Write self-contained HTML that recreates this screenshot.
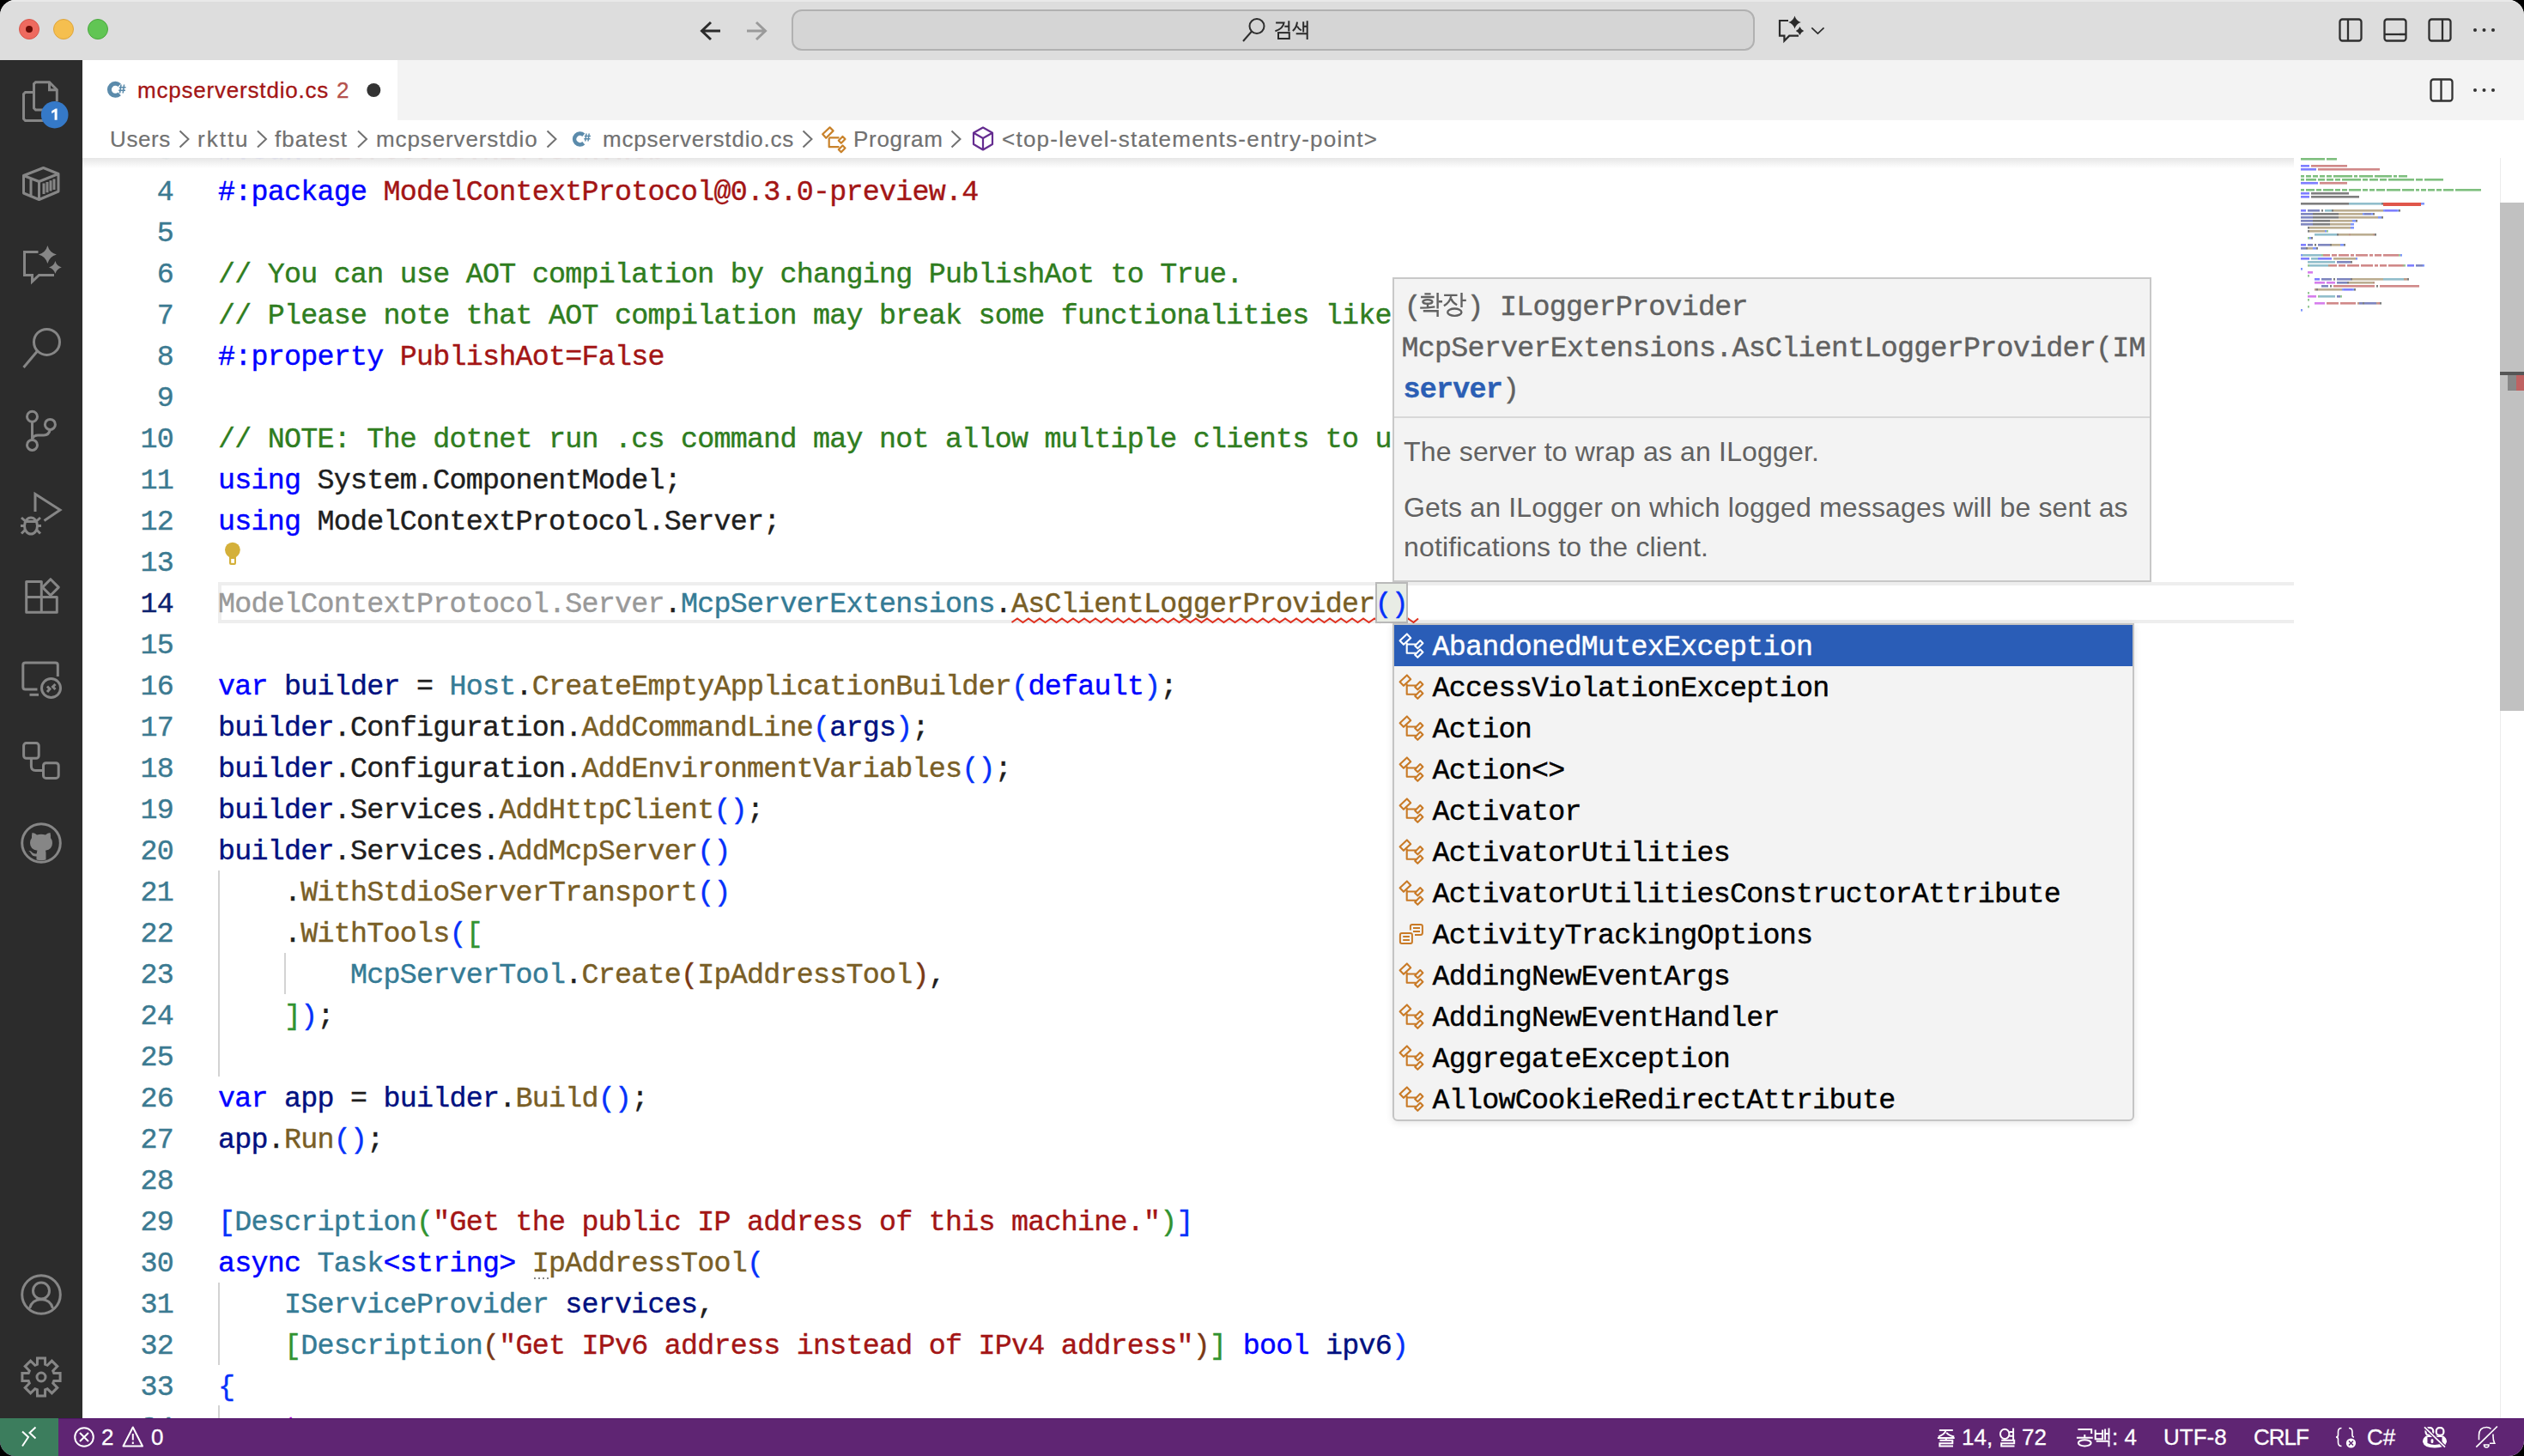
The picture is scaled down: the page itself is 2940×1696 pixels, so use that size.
<!DOCTYPE html>
<html><head><meta charset="utf-8">
<style>
*{margin:0;padding:0;box-sizing:border-box}
html,body{width:2940px;height:1696px;overflow:hidden;background:#000}
body{font-family:"Liberation Sans",sans-serif;position:relative}
#win{position:absolute;left:0;top:0;width:2940px;height:1696px;border-radius:18px;overflow:hidden;background:#fff}
.abs{position:absolute}
svg{position:absolute;overflow:visible}
#title{left:0;top:0;width:2940px;height:70px;background:#dddddd;border-top:2px solid #e9e9e9}
#act{left:0;top:70px;width:96px;height:1582px;background:#2c2c2c}
#tabs{left:96px;top:70px;width:2844px;height:70px;background:#f3f3f3}
#tab{left:96px;top:70px;width:367px;height:70px;background:#fff}
#crumbs{left:96px;top:140px;width:2816px;height:44px;background:#fff}
#status{left:0;top:1652px;width:2940px;height:44px;background:#5f2573;color:#fff;border-top:1px solid #52146a}
#remote{left:0;top:1652px;width:68px;height:44px;background:#3c7d5d}
.code{font-family:"Liberation Mono",monospace;font-size:33.34px;letter-spacing:-0.75px;white-space:pre;line-height:48px;-webkit-text-stroke-width:0.4px}
.ln{position:absolute;left:96px;width:106px;text-align:right;color:#3b7a91;padding-top:1.6px}
.ln.act{color:#0b216f}
.cl{position:absolute;left:254px;padding-top:1.6px;color:#1e1e1e}
.k{color:#0000ff}.v{color:#001080}.t{color:#357b95}.f{color:#795e26}.s{color:#a31515}.c{color:#2f7d20}
.b1{color:#0431fa}.b2{color:#319331}.b3{color:#7b3814}.g{color:#999}.p{color:#af00db}
.ai{stroke:#868686;stroke-width:3;fill:none}
.sb{font-size:26px;color:#fff;-webkit-text-stroke-width:0.3px;position:absolute;top:1652px;line-height:44px;white-space:nowrap}
.bc{position:absolute;top:140px;line-height:44px;font-size:26px;color:#717171;-webkit-text-stroke-width:0.2px;white-space:nowrap}
</style></head><body>
<div id="win">
<!-- TITLE BAR -->
<div id="title" class="abs"></div>
<div class="abs" style="left:22px;top:22px;width:24px;height:24px;border-radius:50%;background:#ee6a5f;border:1px solid #d9574c"></div>
<div class="abs" style="left:30px;top:30px;width:8px;height:8px;border-radius:50%;background:#6a0d07"></div>
<div class="abs" style="left:62px;top:22px;width:24px;height:24px;border-radius:50%;background:#f5bf4f;border:1px solid #dea53c"></div>
<div class="abs" style="left:102px;top:22px;width:24px;height:24px;border-radius:50%;background:#61c554;border:1px solid #4aa83e"></div>
<svg style="left:0;top:0" width="2940" height="70">
  <path d="M839 36 H818 M828 26 L817.5 36 L828 46" stroke="#2b2b2b" stroke-width="3" fill="none"/>
  <path d="M870 36 H891 M881 26 L891.5 36 L881 46" stroke="#9a9a9a" stroke-width="3" fill="none"/>
  <rect x="923" y="12" width="1120" height="46" rx="11" fill="#d5d5d5" stroke="#b1b1b1" stroke-width="2"/>
  <circle cx="1464" cy="30.5" r="8.5" stroke="#2e2e2e" stroke-width="2" fill="none"/>
  <path d="M1458 36.5 L1448 48" stroke="#2e2e2e" stroke-width="2"/>
  <path d="M2083 24 H2073 V41.7 H2078.4 V47.5 L2084.2 41.7 H2095" stroke="#2b2b2b" stroke-width="2.2" fill="none" stroke-linejoin="miter"/>
  <path d="M2090.5 18.5 Q2092.2 24.3 2097.8 26 Q2092.2 27.7 2090.5 33.5 Q2088.8 27.7 2083.2 26 Q2088.8 24.3 2090.5 18.5Z" fill="#2b2b2b"/>
  <path d="M2096.5 31 Q2097.8 34.7 2101.2 36 Q2097.8 37.3 2096.5 41 Q2095.2 37.3 2091.8 36 Q2095.2 34.7 2096.5 31Z" fill="#2b2b2b"/>
  <path d="M2110.3 32.3 L2117.4 39 L2124.5 32.3" stroke="#2b2b2b" stroke-width="1.7" fill="none"/>
  <rect x="2725.5" y="22.5" width="25" height="25" rx="3" stroke="#2f2f2f" stroke-width="2.3" fill="none"/>
  <path d="M2735 22.5 V47.5" stroke="#2f2f2f" stroke-width="2.3"/>
  <rect x="2777.5" y="22.5" width="25" height="25" rx="3" stroke="#2f2f2f" stroke-width="2.3" fill="none"/>
  <path d="M2777.5 40 H2802.5" stroke="#2f2f2f" stroke-width="2.3"/>
  <rect x="2829.5" y="22.5" width="25" height="25" rx="3" stroke="#2f2f2f" stroke-width="2.3" fill="none"/>
  <path d="M2845 22.5 V47.5" stroke="#2f2f2f" stroke-width="2.3"/>
  <circle cx="2883" cy="35" r="2" fill="#2f2f2f"/><circle cx="2893.5" cy="35" r="2" fill="#2f2f2f"/><circle cx="2904" cy="35" r="2" fill="#2f2f2f"/>
</svg>
<svg style="left:0;top:0" width="1" height="1"><g stroke="#2b2b2b" stroke-width="2" fill="none">
<path d="M1486.1 26.4 H1495.6 Q1494.5 33.5 1485.4 36.2 M1501.3 24.3 V36.6 M1496.3 30.7 H1501.3"/>
<rect x="1489" y="38.1" width="12.8" height="6.9"/>
<path d="M1511 25.7 Q1510.3 32.5 1505.8 36 M1511 30.6 Q1512.5 33.5 1515.8 35.4 M1518.2 25.2 V37.6 M1522.7 24.3 V46 M1518.2 30.7 H1522.7 M1509.7 39.2 H1522.7"/>
</g></svg>

<!-- ACTIVITY BAR -->
<div id="act" class="abs"></div>
<svg style="left:16px;top:86px" width="64" height="64">
  <path class="ai" d="M23.5 21.5 H13.5 L11.5 23.5 V52.5 L13.5 54.5 H34" />
  <path class="ai" d="M34 42 H25.5 L23.5 40 V11.7 L25.5 9.7 H41.5 L50.3 18.5 V32" />
  <path class="ai" d="M41.5 9.7 V18.7 H50.3" />
  <circle cx="47.7" cy="47.7" r="15.8" fill="#3579c8"/>
  <path d="M44.2 43.2 L48.8 40.6 H50.6 V53.8 H47.6 V44.3 L44.2 46.2Z" fill="#fff"/>
</svg>
<svg style="left:16px;top:182px" width="64" height="64">
  <path class="ai" d="M34.5 13.5 L52 20.5 V41 L29.5 50.5 L11.5 43 V22.5 Z M11.5 22.5 L29.5 29.5 L52 20.5 M29.5 29.5 V50.5 M20 26 V46.5" stroke-linejoin="round"/>
  <path class="ai" d="M35 31.5 V44 M39 30 V42.3 M43 28.3 V40.6 M47 26.6 V39" stroke-width="2.2"/>
</svg>
<svg style="left:16px;top:278px" width="64" height="64">
  <path class="ai" d="M28.5 15.4 H12.5 V42.4 H21.5 V50 L29.5 42.4 H47" />
  <path d="M39.4 8 Q41.6 16.3 49.9 18.5 Q41.6 20.7 39.4 29 Q37.2 20.7 28.9 18.5 Q37.2 16.3 39.4 8Z" fill="#868686"/>
  <path d="M48.4 26 Q50 31.8 55.8 33.4 Q50 35 48.4 40.8 Q46.8 35 41 33.4 Q46.8 31.8 48.4 26Z" fill="#868686"/>
</svg>
<svg style="left:16px;top:374px" width="64" height="64">
  <circle class="ai" cx="38.5" cy="24.4" r="15"/>
  <path class="ai" d="M27.5 35 L11.5 54"/>
</svg>
<svg style="left:16px;top:470px" width="64" height="64">
  <circle class="ai" cx="21.5" cy="15.2" r="6"/>
  <circle class="ai" cx="42.4" cy="24.4" r="6"/>
  <circle class="ai" cx="21.5" cy="48.4" r="6"/>
  <path class="ai" d="M21.5 21.2 V42.4 M42.4 30.4 Q41 37 35 37 H28 Q22.5 37 21.5 42"/>
</svg>
<svg style="left:16px;top:566px" width="64" height="64">
  <path class="ai" d="M25 30 V9.5 L54 28 L35.5 40.5" stroke-linejoin="miter"/>
  <ellipse class="ai" cx="20" cy="46.5" rx="7.5" ry="9.5"/>
  <path class="ai" d="M13 41.5 H27 M9 37 L13.5 41 M31 37 L26.5 41 M8 46.5 H12.5 M27.5 46.5 H32 M9 55.5 L13.5 51 M31 55.5 L26.5 51"/>
</svg>
<svg style="left:16px;top:662px" width="64" height="64">
  <path class="ai" d="M14.7 15.6 H32.3 V51.2 H14.7 Z M14.7 33.5 H50.3 V51.2 H32.3" stroke-linejoin="round"/>
  <path class="ai" d="M42.9 12.7 L52.3 22.1 L42.9 31.5 L33.5 22.1 Z" stroke-linejoin="round"/>
</svg>
<svg style="left:16px;top:758px" width="64" height="64">
  <path class="ai" d="M27.5 45 H13.5 Q10.8 45 10.8 42.3 V16.6 Q10.8 13.9 13.5 13.9 H48.6 Q51.3 13.9 51.3 16.6 V30" />
  <path class="ai" d="M18.5 51.3 H29" />
  <circle class="ai" cx="43.5" cy="43.5" r="11"/>
  <path class="ai" d="M39 41.5 L42 44.5 L39 48 M48.5 39 L45.5 42 L48.5 45" stroke-width="2.2"/>
</svg>
<svg style="left:16px;top:854px" width="64" height="64">
  <rect class="ai" x="11.6" y="11.6" width="17.6" height="17.6" rx="3"/>
  <rect class="ai" x="34.5" y="34.7" width="17.7" height="17.7" rx="3"/>
  <path class="ai" d="M20.4 29.2 V38.5 Q20.4 43.5 25.4 43.5 H34.5"/>
</svg>
<svg style="left:16px;top:950px" width="64" height="64">
  <circle class="ai" cx="32" cy="32" r="22.3"/>
  <path d="M21.5 20 Q25 20.5 27 22.4 Q32 21 37 22.4 Q39 20.5 42.5 20 Q43.3 23.5 43 26 Q45 28.5 45 32 Q45 39.5 37 40.8 Q37.5 42 37.5 44 V51.5 Q32 53 26.5 51.5 V47.5 Q22 48 20 44 Q19 42 17.3 41 Q20 40.5 21.5 43 Q23.5 45 26.8 44.3 Q26.8 42 27.5 40.8 Q19 39.5 19 32 Q19 28.5 21 26 Q20.7 23.5 21.5 20Z" fill="#868686"/>
</svg>
<svg style="left:16px;top:1476px" width="64" height="64">
  <circle class="ai" cx="32" cy="32" r="22.3"/>
  <circle class="ai" cx="32" cy="27.5" r="9.5"/>
  <path class="ai" d="M18.5 48 Q21 38 32 37.5 Q43 38 45.5 48"/>
</svg>
<svg style="left:16px;top:1572px" width="64" height="64">
  <path class="ai" d="M27.4 17.2 L27.5 9.9 L36.5 9.9 L36.6 17.2 L39.2 18.3 L44.4 13.2 L50.8 19.6 L45.7 24.8 L46.8 27.4 L54.1 27.5 L54.1 36.5 L46.8 36.6 L45.7 39.2 L50.8 44.4 L44.4 50.8 L39.2 45.7 L36.6 46.8 L36.5 54.1 L27.5 54.1 L27.4 46.8 L24.8 45.7 L19.6 50.8 L13.2 44.4 L18.3 39.2 L17.2 36.6 L9.9 36.5 L9.9 27.5 L17.2 27.4 L18.3 24.8 L13.2 19.6 L19.6 13.2 L24.8 18.3Z"/>
  <circle class="ai" cx="32" cy="32" r="5"/>
</svg>


<!-- TABS -->
<div id="tabs" class="abs"></div>
<div id="tab" class="abs"></div>
<svg style="left:0;top:0" width="1" height="1">
  <path d="M139.2 99.2 A7 7 0 1 0 139.2 109.4" stroke="#5b8bab" stroke-width="5" fill="none"/>
  <path d="M141 98.5 L139.6 108.5 M144.6 98.5 L143.2 108.5 M138.8 101.8 H146.6 M138.2 105.2 H146" stroke="#5b8bab" stroke-width="1.6" fill="none"/>
  <circle cx="435.3" cy="105" r="8" fill="#333"/>
  <rect x="2831.5" y="92.5" width="25" height="25" rx="3" stroke="#333" stroke-width="2.3" fill="none"/>
  <path d="M2843.5 92.5 V117.5" stroke="#333" stroke-width="2.3"/>
  <circle cx="2883" cy="105" r="2" fill="#333"/><circle cx="2893.5" cy="105" r="2" fill="#333"/><circle cx="2904" cy="105" r="2" fill="#333"/>
</svg>
<div class="abs" style="left:160px;top:70px;line-height:70px;font-size:26px;color:#a31515;letter-spacing:0.8px;white-space:nowrap;-webkit-text-stroke:0.3px #a31515">mcpserverstdio.cs</div>
<div class="abs" style="left:392px;top:70px;line-height:70px;font-size:26px;color:#b5524d;white-space:nowrap;-webkit-text-stroke:0.3px #b5524d">2</div>


<!-- BREADCRUMBS -->
<div id="crumbs" class="abs"></div>
<div class="bc" style="left:128px;letter-spacing:0.6px">Users</div>
<div class="bc" style="left:230px;letter-spacing:2px">rkttu</div>
<div class="bc" style="left:320px;letter-spacing:1px">fbatest</div>
<div class="bc" style="left:438px;letter-spacing:0.88px">mcpserverstdio</div>
<div class="bc" style="left:702px;letter-spacing:0.8px">mcpserverstdio.cs</div>
<div class="bc" style="left:994px;letter-spacing:0.7px">Program</div>
<div class="bc" style="left:1167px;letter-spacing:1.24px">&lt;top-level-statements-entry-point&gt;</div>
<svg style="left:0;top:0" width="1" height="1">
  <g stroke="#717171" stroke-width="2" fill="none">
    <path d="M209.5 152.5 L219.5 162 L209.5 171.5"/>
    <path d="M300 152.5 L310 162 L300 171.5"/>
    <path d="M417 152.5 L427 162 L417 171.5"/>
    <path d="M637.5 152.5 L647.5 162 L637.5 171.5"/>
    <path d="M935.5 152.5 L945.5 162 L935.5 171.5"/>
    <path d="M1108.5 152.5 L1118.5 162 L1108.5 171.5"/>
  </g>
  <path d="M679.8 157.2 A6.4 6.4 0 1 0 679.8 166.8" stroke="#5b8bab" stroke-width="4.6" fill="none"/>
  <path d="M683 155.5 L681.8 164.5 M686.2 155.5 L685 164.5 M680.8 158.5 H688 M680.3 161.8 H687.5" stroke="#5b8bab" stroke-width="1.5" fill="none"/>
  <g stroke="#c9822a" stroke-width="2.2" fill="none" stroke-linejoin="round">
    <path d="M958.2 156.3 L966.6 148.4 L970.6 152.4 L962.2 160.8 Z"/>
    <path d="M965.7 160.5 V171.2 H977.5 M965.7 160.3 H977.5"/>
    <path d="M976.8 163.8 L981.5 159 L984.5 162 L979.8 166.8 Z"/>
    <path d="M976.8 174.3 L981.5 169.5 L984.5 172.5 L979.8 177.3 Z"/>
  </g>
  <g stroke="#652d90" stroke-width="2.2" fill="none" stroke-linejoin="round">
    <path d="M1145 148.5 L1156 154.8 V168 L1145 174.5 L1134 168 V154.8 Z M1134 154.8 L1145 161 L1156 154.8 M1145 161 V174.5"/>
  </g>
</svg>


<!-- EDITOR -->
<div id="editor" class="abs code" style="left:0;top:184px;width:2912px;height:1468px;overflow:hidden">
<div class="abs" style="left:254px;top:494px;width:2418px;height:48px;border:4px solid #eeeeee;border-right:none"></div>
<div class="abs" style="left:254px;top:830px;width:2px;height:240px;background:#d3d3d3"></div>
<div class="abs" style="left:331px;top:926px;width:2px;height:48px;background:#d3d3d3"></div>
<div class="abs" style="left:254px;top:1310px;width:2px;height:96px;background:#d3d3d3"></div>
<div class="abs" style="left:254px;top:1453px;width:2px;height:48px;background:#d3d3d3"></div>
<svg style="left:0;top:0" width="1" height="1"><g transform="translate(0 -184)"><path d="M1178.5 725.0 L1185.0 720.5 L1191.5 725.0 L1198.0 720.5 L1204.5 725.0 L1211.0 720.5 L1217.5 725.0 L1224.0 720.5 L1230.5 725.0 L1237.0 720.5 L1243.5 725.0 L1250.0 720.5 L1256.5 725.0 L1263.0 720.5 L1269.5 725.0 L1276.0 720.5 L1282.5 725.0 L1289.0 720.5 L1295.5 725.0 L1302.0 720.5 L1308.5 725.0 L1315.0 720.5 L1321.5 725.0 L1328.0 720.5 L1334.5 725.0 L1341.0 720.5 L1347.5 725.0 L1354.0 720.5 L1360.5 725.0 L1367.0 720.5 L1373.5 725.0 L1380.0 720.5 L1386.5 725.0 L1393.0 720.5 L1399.5 725.0 L1406.0 720.5 L1412.5 725.0 L1419.0 720.5 L1425.5 725.0 L1432.0 720.5 L1438.5 725.0 L1445.0 720.5 L1451.5 725.0 L1458.0 720.5 L1464.5 725.0 L1471.0 720.5 L1477.5 725.0 L1484.0 720.5 L1490.5 725.0 L1497.0 720.5 L1503.5 725.0 L1510.0 720.5 L1516.5 725.0 L1523.0 720.5 L1529.5 725.0 L1536.0 720.5 L1542.5 725.0 L1549.0 720.5 L1555.5 725.0 L1562.0 720.5 L1568.5 725.0 L1575.0 720.5 L1581.5 725.0 L1588.0 720.5 L1594.5 725.0 L1601.0 720.5 L1607.5 725.0 L1614.0 720.5 L1620.5 725.0 L1627.0 720.5 L1633.5 725.0 L1640.0 720.5 L1646.5 725.0 L1652.0 720.5" stroke="#e0301e" stroke-width="2" fill="none"/></g></svg>
<div class="abs" style="left:1602px;top:494px;width:38px;height:48px;background:#e8ece5;border:2px solid #b9b9b9"></div>

<div class="ln" style="top:-34px">3</div>
<div class="cl" style="top:-34px"><span class="k">#:sdk</span> <span class="s">Microsoft.NET.Sdk.Web</span></div>
<div class="ln" style="top:14px">4</div>
<div class="cl" style="top:14px"><span class="k">#:package</span> <span class="s">ModelContextProtocol@0.3.0-preview.4</span></div>
<div class="ln" style="top:62px">5</div>
<div class="ln" style="top:110px">6</div>
<div class="cl" style="top:110px"><span class="c">// You can use AOT compilation by changing PublishAot to True.</span></div>
<div class="ln" style="top:158px">7</div>
<div class="cl" style="top:158px"><span class="c">// Please note that AOT compilation may break some functionalities like reflection.</span></div>
<div class="ln" style="top:206px">8</div>
<div class="cl" style="top:206px"><span class="k">#:property</span> <span class="s">PublishAot=False</span></div>
<div class="ln" style="top:254px">9</div>
<div class="ln" style="top:302px">10</div>
<div class="cl" style="top:302px"><span class="c">// NOTE: The dotnet run .cs command may not allow multiple clients to use this MCP server simultaneously.</span></div>
<div class="ln" style="top:350px">11</div>
<div class="cl" style="top:350px"><span class="k">using</span> System.ComponentModel;</div>
<div class="ln" style="top:398px">12</div>
<div class="cl" style="top:398px"><span class="k">using</span> ModelContextProtocol.Server;</div>
<div class="ln" style="top:446px">13</div>
<div class="ln act" style="top:494px">14</div>
<div class="cl" style="top:494px"><span class="g">ModelContextProtocol.Server</span>.<span class="t">McpServerExtensions</span>.<span class="f">AsClientLoggerProvider</span><span class="b1">()</span></div>
<div class="ln" style="top:542px">15</div>
<div class="ln" style="top:590px">16</div>
<div class="cl" style="top:590px"><span class="k">var</span> <span class="v">builder</span> = <span class="t">Host</span>.<span class="f">CreateEmptyApplicationBuilder</span><span class="b1">(</span><span class="k">default</span><span class="b1">)</span>;</div>
<div class="ln" style="top:638px">17</div>
<div class="cl" style="top:638px"><span class="v">builder</span>.Configuration.<span class="f">AddCommandLine</span><span class="b1">(</span><span class="v">args</span><span class="b1">)</span>;</div>
<div class="ln" style="top:686px">18</div>
<div class="cl" style="top:686px"><span class="v">builder</span>.Configuration.<span class="f">AddEnvironmentVariables</span><span class="b1">()</span>;</div>
<div class="ln" style="top:734px">19</div>
<div class="cl" style="top:734px"><span class="v">builder</span>.Services.<span class="f">AddHttpClient</span><span class="b1">()</span>;</div>
<div class="ln" style="top:782px">20</div>
<div class="cl" style="top:782px"><span class="v">builder</span>.Services.<span class="f">AddMcpServer</span><span class="b1">()</span></div>
<div class="ln" style="top:830px">21</div>
<div class="cl" style="top:830px">    .<span class="f">WithStdioServerTransport</span><span class="b1">()</span></div>
<div class="ln" style="top:878px">22</div>
<div class="cl" style="top:878px">    .<span class="f">WithTools</span><span class="b1">(</span><span class="b2">[</span></div>
<div class="ln" style="top:926px">23</div>
<div class="cl" style="top:926px">        <span class="t">McpServerTool</span>.<span class="f">Create</span><span class="b3">(</span><span class="f">IpAddressTool</span><span class="b3">)</span>,</div>
<div class="ln" style="top:974px">24</div>
<div class="cl" style="top:974px">    <span class="b2">]</span><span class="b1">)</span>;</div>
<div class="ln" style="top:1022px">25</div>
<div class="ln" style="top:1070px">26</div>
<div class="cl" style="top:1070px"><span class="k">var</span> <span class="v">app</span> = <span class="v">builder</span>.<span class="f">Build</span><span class="b1">()</span>;</div>
<div class="ln" style="top:1118px">27</div>
<div class="cl" style="top:1118px"><span class="v">app</span>.<span class="f">Run</span><span class="b1">()</span>;</div>
<div class="ln" style="top:1166px">28</div>
<div class="ln" style="top:1214px">29</div>
<div class="cl" style="top:1214px"><span class="b1">[</span><span class="t">Description</span><span class="b2">(</span><span class="s">"Get the public IP address of this machine."</span><span class="b2">)</span><span class="b1">]</span></div>
<div class="ln" style="top:1262px">30</div>
<div class="cl" style="top:1262px"><span class="k">async</span> <span class="t">Task</span><span class="k">&lt;string&gt;</span> <span class="f">IpAddressTool</span><span class="b1">(</span></div>
<div class="ln" style="top:1310px">31</div>
<div class="cl" style="top:1310px">    <span class="t">IServiceProvider</span> <span class="v">services</span>,</div>
<div class="ln" style="top:1358px">32</div>
<div class="cl" style="top:1358px">    <span class="b2">[</span><span class="t">Description</span><span class="b3">(</span><span class="s">"Get IPv6 address instead of IPv4 address"</span><span class="b3">)</span><span class="b2">]</span> <span class="k">bool</span> <span class="v">ipv6</span><span class="b1">)</span></div>
<div class="ln" style="top:1406px">33</div>
<div class="cl" style="top:1406px"><span class="b1">{</span></div>
<div class="ln" style="top:1454px">34</div>
<div class="cl" style="top:1454px">    <span class="p">try</span></div>
</div>
<svg style="left:0;top:0" width="1" height="1">
  <circle cx="270.9" cy="640.6" r="8.9" fill="#d4b03a"/>
  <path d="M263.5 645 L267 649 V656 Q267 658 269 658 H273 Q275 658 275 656 V649 L278.3 645 Z" fill="#d4b03a"/>
  <rect x="269.2" y="651" width="3.8" height="4.8" fill="#fff"/>
  <path d="M622 1489 H641" stroke="#888" stroke-width="2" stroke-dasharray="2 3"/>
</svg>
<div class="abs" style="left:96px;top:184px;width:2576px;height:12px;background:linear-gradient(#e6e6e6,#ffffff00)"></div>
<!-- minimap -->
<div>
<svg style="left:0;top:0" width="1" height="1"><g opacity="0.5">
<rect x="2680" y="184" width="28" height="2.6" fill="#008000"/>
<rect x="2710" y="184" width="12" height="2.6" fill="#008000"/>
<rect x="2680" y="192" width="10" height="2.6" fill="#0000ff"/>
<rect x="2692" y="192" width="42" height="2.6" fill="#a31515"/>
<rect x="2680" y="196" width="18" height="2.6" fill="#0000ff"/>
<rect x="2700" y="196" width="72" height="2.6" fill="#a31515"/>
<rect x="2680" y="204" width="4" height="2.6" fill="#008000"/>
<rect x="2686" y="204" width="6" height="2.6" fill="#008000"/>
<rect x="2694" y="204" width="6" height="2.6" fill="#008000"/>
<rect x="2702" y="204" width="6" height="2.6" fill="#008000"/>
<rect x="2710" y="204" width="6" height="2.6" fill="#008000"/>
<rect x="2718" y="204" width="22" height="2.6" fill="#008000"/>
<rect x="2742" y="204" width="4" height="2.6" fill="#008000"/>
<rect x="2748" y="204" width="16" height="2.6" fill="#008000"/>
<rect x="2766" y="204" width="20" height="2.6" fill="#008000"/>
<rect x="2788" y="204" width="4" height="2.6" fill="#008000"/>
<rect x="2794" y="204" width="10" height="2.6" fill="#008000"/>
<rect x="2680" y="208" width="4" height="2.6" fill="#008000"/>
<rect x="2686" y="208" width="12" height="2.6" fill="#008000"/>
<rect x="2700" y="208" width="8" height="2.6" fill="#008000"/>
<rect x="2710" y="208" width="8" height="2.6" fill="#008000"/>
<rect x="2720" y="208" width="6" height="2.6" fill="#008000"/>
<rect x="2728" y="208" width="22" height="2.6" fill="#008000"/>
<rect x="2752" y="208" width="6" height="2.6" fill="#008000"/>
<rect x="2760" y="208" width="10" height="2.6" fill="#008000"/>
<rect x="2772" y="208" width="8" height="2.6" fill="#008000"/>
<rect x="2782" y="208" width="30" height="2.6" fill="#008000"/>
<rect x="2814" y="208" width="8" height="2.6" fill="#008000"/>
<rect x="2824" y="208" width="22" height="2.6" fill="#008000"/>
<rect x="2680" y="212" width="20" height="2.6" fill="#0000ff"/>
<rect x="2702" y="212" width="32" height="2.6" fill="#a31515"/>
<rect x="2680" y="220" width="4" height="2.6" fill="#008000"/>
<rect x="2686" y="220" width="10" height="2.6" fill="#008000"/>
<rect x="2698" y="220" width="6" height="2.6" fill="#008000"/>
<rect x="2706" y="220" width="12" height="2.6" fill="#008000"/>
<rect x="2720" y="220" width="6" height="2.6" fill="#008000"/>
<rect x="2728" y="220" width="6" height="2.6" fill="#008000"/>
<rect x="2736" y="220" width="14" height="2.6" fill="#008000"/>
<rect x="2752" y="220" width="6" height="2.6" fill="#008000"/>
<rect x="2760" y="220" width="6" height="2.6" fill="#008000"/>
<rect x="2768" y="220" width="10" height="2.6" fill="#008000"/>
<rect x="2780" y="220" width="16" height="2.6" fill="#008000"/>
<rect x="2798" y="220" width="14" height="2.6" fill="#008000"/>
<rect x="2814" y="220" width="4" height="2.6" fill="#008000"/>
<rect x="2820" y="220" width="6" height="2.6" fill="#008000"/>
<rect x="2828" y="220" width="8" height="2.6" fill="#008000"/>
<rect x="2838" y="220" width="6" height="2.6" fill="#008000"/>
<rect x="2846" y="220" width="12" height="2.6" fill="#008000"/>
<rect x="2860" y="220" width="30" height="2.6" fill="#008000"/>
<rect x="2680" y="224" width="10" height="2.6" fill="#0000ff"/>
<rect x="2692" y="224" width="44" height="2.6" fill="#000"/>
<rect x="2680" y="228" width="10" height="2.6" fill="#0000ff"/>
<rect x="2692" y="228" width="56" height="2.6" fill="#000"/>
<rect x="2680" y="236" width="54" height="2.6" fill="#000"/>
<rect x="2734" y="236" width="2" height="2.6" fill="#000"/>
<rect x="2736" y="236" width="38" height="2.6" fill="#267f99"/>
<rect x="2774" y="236" width="2" height="2.6" fill="#000"/>
<rect x="2776" y="236" width="44" height="2.6" fill="#795e26"/>
<rect x="2820" y="236" width="4" height="2.6" fill="#0431fa"/>
<rect x="2680" y="244" width="6" height="2.6" fill="#0000ff"/>
<rect x="2688" y="244" width="14" height="2.6" fill="#001080"/>
<rect x="2704" y="244" width="2" height="2.6" fill="#000"/>
<rect x="2708" y="244" width="8" height="2.6" fill="#267f99"/>
<rect x="2716" y="244" width="2" height="2.6" fill="#000"/>
<rect x="2718" y="244" width="58" height="2.6" fill="#795e26"/>
<rect x="2776" y="244" width="2" height="2.6" fill="#0431fa"/>
<rect x="2778" y="244" width="14" height="2.6" fill="#0000ff"/>
<rect x="2792" y="244" width="2" height="2.6" fill="#0431fa"/>
<rect x="2794" y="244" width="2" height="2.6" fill="#000"/>
<rect x="2680" y="248" width="14" height="2.6" fill="#001080"/>
<rect x="2694" y="248" width="30" height="2.6" fill="#000"/>
<rect x="2724" y="248" width="28" height="2.6" fill="#795e26"/>
<rect x="2752" y="248" width="2" height="2.6" fill="#0431fa"/>
<rect x="2754" y="248" width="8" height="2.6" fill="#001080"/>
<rect x="2762" y="248" width="2" height="2.6" fill="#0431fa"/>
<rect x="2764" y="248" width="2" height="2.6" fill="#000"/>
<rect x="2680" y="252" width="14" height="2.6" fill="#001080"/>
<rect x="2694" y="252" width="30" height="2.6" fill="#000"/>
<rect x="2724" y="252" width="46" height="2.6" fill="#795e26"/>
<rect x="2770" y="252" width="4" height="2.6" fill="#0431fa"/>
<rect x="2774" y="252" width="2" height="2.6" fill="#000"/>
<rect x="2680" y="256" width="14" height="2.6" fill="#001080"/>
<rect x="2694" y="256" width="20" height="2.6" fill="#000"/>
<rect x="2714" y="256" width="26" height="2.6" fill="#795e26"/>
<rect x="2740" y="256" width="4" height="2.6" fill="#0431fa"/>
<rect x="2744" y="256" width="2" height="2.6" fill="#000"/>
<rect x="2680" y="260" width="14" height="2.6" fill="#001080"/>
<rect x="2694" y="260" width="20" height="2.6" fill="#000"/>
<rect x="2714" y="260" width="24" height="2.6" fill="#795e26"/>
<rect x="2738" y="260" width="4" height="2.6" fill="#0431fa"/>
<rect x="2688" y="264" width="2" height="2.6" fill="#000"/>
<rect x="2690" y="264" width="48" height="2.6" fill="#795e26"/>
<rect x="2738" y="264" width="4" height="2.6" fill="#0431fa"/>
<rect x="2688" y="268" width="2" height="2.6" fill="#000"/>
<rect x="2690" y="268" width="18" height="2.6" fill="#795e26"/>
<rect x="2708" y="268" width="2" height="2.6" fill="#0431fa"/>
<rect x="2710" y="268" width="2" height="2.6" fill="#319331"/>
<rect x="2696" y="272" width="26" height="2.6" fill="#267f99"/>
<rect x="2722" y="272" width="2" height="2.6" fill="#000"/>
<rect x="2724" y="272" width="12" height="2.6" fill="#795e26"/>
<rect x="2736" y="272" width="2" height="2.6" fill="#7b3814"/>
<rect x="2738" y="272" width="26" height="2.6" fill="#795e26"/>
<rect x="2764" y="272" width="2" height="2.6" fill="#7b3814"/>
<rect x="2766" y="272" width="2" height="2.6" fill="#000"/>
<rect x="2688" y="276" width="2" height="2.6" fill="#319331"/>
<rect x="2690" y="276" width="2" height="2.6" fill="#0431fa"/>
<rect x="2692" y="276" width="2" height="2.6" fill="#000"/>
<rect x="2680" y="284" width="6" height="2.6" fill="#0000ff"/>
<rect x="2688" y="284" width="6" height="2.6" fill="#001080"/>
<rect x="2696" y="284" width="2" height="2.6" fill="#000"/>
<rect x="2700" y="284" width="14" height="2.6" fill="#001080"/>
<rect x="2714" y="284" width="2" height="2.6" fill="#000"/>
<rect x="2716" y="284" width="10" height="2.6" fill="#795e26"/>
<rect x="2726" y="284" width="4" height="2.6" fill="#0431fa"/>
<rect x="2730" y="284" width="2" height="2.6" fill="#000"/>
<rect x="2680" y="288" width="6" height="2.6" fill="#001080"/>
<rect x="2686" y="288" width="2" height="2.6" fill="#000"/>
<rect x="2688" y="288" width="6" height="2.6" fill="#795e26"/>
<rect x="2694" y="288" width="4" height="2.6" fill="#0431fa"/>
<rect x="2698" y="288" width="2" height="2.6" fill="#000"/>
<rect x="2680" y="296" width="2" height="2.6" fill="#0431fa"/>
<rect x="2682" y="296" width="22" height="2.6" fill="#267f99"/>
<rect x="2704" y="296" width="2" height="2.6" fill="#319331"/>
<rect x="2706" y="296" width="8" height="2.6" fill="#a31515"/>
<rect x="2716" y="296" width="6" height="2.6" fill="#a31515"/>
<rect x="2724" y="296" width="12" height="2.6" fill="#a31515"/>
<rect x="2738" y="296" width="4" height="2.6" fill="#a31515"/>
<rect x="2744" y="296" width="14" height="2.6" fill="#a31515"/>
<rect x="2760" y="296" width="4" height="2.6" fill="#a31515"/>
<rect x="2766" y="296" width="8" height="2.6" fill="#a31515"/>
<rect x="2776" y="296" width="18" height="2.6" fill="#a31515"/>
<rect x="2794" y="296" width="2" height="2.6" fill="#319331"/>
<rect x="2796" y="296" width="2" height="2.6" fill="#0431fa"/>
<rect x="2680" y="300" width="10" height="2.6" fill="#0000ff"/>
<rect x="2692" y="300" width="8" height="2.6" fill="#267f99"/>
<rect x="2700" y="300" width="16" height="2.6" fill="#0000ff"/>
<rect x="2718" y="300" width="26" height="2.6" fill="#795e26"/>
<rect x="2744" y="300" width="2" height="2.6" fill="#0431fa"/>
<rect x="2688" y="304" width="32" height="2.6" fill="#267f99"/>
<rect x="2722" y="304" width="16" height="2.6" fill="#001080"/>
<rect x="2738" y="304" width="2" height="2.6" fill="#000"/>
<rect x="2688" y="308" width="2" height="2.6" fill="#319331"/>
<rect x="2690" y="308" width="22" height="2.6" fill="#267f99"/>
<rect x="2712" y="308" width="2" height="2.6" fill="#7b3814"/>
<rect x="2714" y="308" width="8" height="2.6" fill="#a31515"/>
<rect x="2724" y="308" width="8" height="2.6" fill="#a31515"/>
<rect x="2734" y="308" width="14" height="2.6" fill="#a31515"/>
<rect x="2750" y="308" width="14" height="2.6" fill="#a31515"/>
<rect x="2766" y="308" width="4" height="2.6" fill="#a31515"/>
<rect x="2772" y="308" width="8" height="2.6" fill="#a31515"/>
<rect x="2782" y="308" width="16" height="2.6" fill="#a31515"/>
<rect x="2798" y="308" width="2" height="2.6" fill="#7b3814"/>
<rect x="2800" y="308" width="2" height="2.6" fill="#319331"/>
<rect x="2804" y="308" width="8" height="2.6" fill="#0000ff"/>
<rect x="2814" y="308" width="8" height="2.6" fill="#001080"/>
<rect x="2822" y="308" width="2" height="2.6" fill="#0431fa"/>
<rect x="2680" y="312" width="2" height="2.6" fill="#0431fa"/>
<rect x="2688" y="316" width="6" height="2.6" fill="#af00db"/>
<rect x="2688" y="320" width="2" height="2.6" fill="#319331"/>
<rect x="2696" y="324" width="6" height="2.6" fill="#0000ff"/>
<rect x="2704" y="324" width="12" height="2.6" fill="#001080"/>
<rect x="2718" y="324" width="2" height="2.6" fill="#000"/>
<rect x="2722" y="324" width="16" height="2.6" fill="#001080"/>
<rect x="2738" y="324" width="2" height="2.6" fill="#000"/>
<rect x="2740" y="324" width="36" height="2.6" fill="#795e26"/>
<rect x="2776" y="324" width="24" height="2.6" fill="#267f99"/>
<rect x="2800" y="324" width="4" height="2.6" fill="#7b3814"/>
<rect x="2804" y="324" width="2" height="2.6" fill="#000"/>
<rect x="2696" y="328" width="12" height="2.6" fill="#af00db"/>
<rect x="2710" y="328" width="10" height="2.6" fill="#af00db"/>
<rect x="2722" y="328" width="12" height="2.6" fill="#001080"/>
<rect x="2734" y="328" width="2" height="2.6" fill="#000"/>
<rect x="2736" y="328" width="28" height="2.6" fill="#795e26"/>
<rect x="2764" y="328" width="2" height="2.6" fill="#7b3814"/>
<rect x="2704" y="332" width="8" height="2.6" fill="#001080"/>
<rect x="2714" y="332" width="2" height="2.6" fill="#000"/>
<rect x="2718" y="332" width="48" height="2.6" fill="#a31515"/>
<rect x="2768" y="332" width="2" height="2.6" fill="#000"/>
<rect x="2772" y="332" width="46" height="2.6" fill="#a31515"/>
<rect x="2696" y="336" width="2" height="2.6" fill="#7b3814"/>
<rect x="2698" y="336" width="2" height="2.6" fill="#000"/>
<rect x="2700" y="336" width="28" height="2.6" fill="#795e26"/>
<rect x="2728" y="336" width="2" height="2.6" fill="#0431fa"/>
<rect x="2730" y="336" width="10" height="2.6" fill="#0000ff"/>
<rect x="2740" y="336" width="2" height="2.6" fill="#0431fa"/>
<rect x="2742" y="336" width="2" height="2.6" fill="#000"/>
<rect x="2688" y="340" width="2" height="2.6" fill="#319331"/>
<rect x="2688" y="344" width="10" height="2.6" fill="#af00db"/>
<rect x="2700" y="344" width="2" height="2.6" fill="#319331"/>
<rect x="2702" y="344" width="18" height="2.6" fill="#267f99"/>
<rect x="2722" y="344" width="4" height="2.6" fill="#001080"/>
<rect x="2726" y="344" width="2" height="2.6" fill="#319331"/>
<rect x="2688" y="348" width="2" height="2.6" fill="#319331"/>
<rect x="2696" y="352" width="12" height="2.6" fill="#af00db"/>
<rect x="2710" y="352" width="14" height="2.6" fill="#a31515"/>
<rect x="2726" y="352" width="18" height="2.6" fill="#a31515"/>
<rect x="2746" y="352" width="2" height="2.6" fill="#7b3814"/>
<rect x="2748" y="352" width="4" height="2.6" fill="#001080"/>
<rect x="2752" y="352" width="2" height="2.6" fill="#000"/>
<rect x="2754" y="352" width="14" height="2.6" fill="#001080"/>
<rect x="2768" y="352" width="2" height="2.6" fill="#7b3814"/>
<rect x="2770" y="352" width="2" height="2.6" fill="#a31515"/>
<rect x="2772" y="352" width="2" height="2.6" fill="#000"/>
<rect x="2688" y="356" width="2" height="2.6" fill="#319331"/>
<rect x="2680" y="360" width="2" height="2.6" fill="#0431fa"/>
</g><rect x="2776" y="236" width="44" height="4" fill="#e0564a"/></svg>
</div>
<div class="abs" style="left:2912px;top:184px;width:28px;height:1468px;border-left:1px solid #ececec"></div>
<div class="abs" style="left:2912px;top:236px;width:28px;height:592px;background:#c1c1c1"></div>
<div class="abs" style="left:2912px;top:433px;width:28px;height:4px;background:#555"></div>
<div class="abs" style="left:2921px;top:437px;width:10px;height:18px;background:#878787"></div>
<div class="abs" style="left:2931px;top:437px;width:9px;height:18px;background:#bf6262"></div>

<div class="abs" style="left:1622px;top:323px;width:884px;height:355px;background:#f3f3f3;border:2px solid #c8c8c8;overflow:hidden">
<div class="abs code" style="left:11.5px;top:7px;color:#616161;padding-top:1.6px">(<span style="display:inline-block;width:53.8px"></span>) ILoggerProvider</div>
<div class="abs code" style="left:8.5px;top:55.5px;color:#616161;padding-top:1.6px">McpServerExtensions.AsClientLoggerProvider(IM</div>
<div class="abs code" style="left:10.5px;top:103px;color:#616161;padding-top:1.6px"><b style="color:#2b5eb4">server</b>)</div>
<div class="abs" style="left:0;top:160px;width:880px;height:2px;background:#d8d8d8"></div>
<div class="abs" style="left:11px;top:178px;font-size:32px;line-height:46.5px;color:#616161;white-space:nowrap;letter-spacing:0.17px">The server to wrap as an ILogger.</div>
<div class="abs" style="left:11px;top:242.5px;font-size:32px;line-height:46.5px;color:#616161;white-space:nowrap;letter-spacing:0.17px">Gets an ILogger on which logged messages will be sent as<br>notifications to the client.</div>
</div>
<div class="abs" style="left:1622px;top:726px;width:864px;height:580px;background:#f3f3f3;border:2px solid #c4c4c4;border-radius:0 0 6px 6px;box-shadow:0 2px 8px rgba(0,0,0,0.10)"></div>
<div class="abs" style="left:1624px;top:728px;width:860px;height:48px;background:#2a5db7"></div>
<div class="abs code" style="left:1668.5px;top:728px;color:#fff;padding-top:2.3px">AbandonedMutexException</div>
<div class="abs code" style="left:1668.5px;top:776px;color:#000;padding-top:2.3px">AccessViolationException</div>
<div class="abs code" style="left:1668.5px;top:824px;color:#000;padding-top:2.3px">Action</div>
<div class="abs code" style="left:1668.5px;top:872px;color:#000;padding-top:2.3px">Action&lt;&gt;</div>
<div class="abs code" style="left:1668.5px;top:920px;color:#000;padding-top:2.3px">Activator</div>
<div class="abs code" style="left:1668.5px;top:968px;color:#000;padding-top:2.3px">ActivatorUtilities</div>
<div class="abs code" style="left:1668.5px;top:1016px;color:#000;padding-top:2.3px">ActivatorUtilitiesConstructorAttribute</div>
<div class="abs code" style="left:1668.5px;top:1064px;color:#000;padding-top:2.3px">ActivityTrackingOptions</div>
<div class="abs code" style="left:1668.5px;top:1112px;color:#000;padding-top:2.3px">AddingNewEventArgs</div>
<div class="abs code" style="left:1668.5px;top:1160px;color:#000;padding-top:2.3px">AddingNewEventHandler</div>
<div class="abs code" style="left:1668.5px;top:1208px;color:#000;padding-top:2.3px">AggregateException</div>
<div class="abs code" style="left:1668.5px;top:1256px;color:#000;padding-top:2.3px">AllowCookieRedirectAttribute</div>
<svg style="left:0;top:0" width="1" height="1">
<g transform="translate(1628 736)" stroke="#fff" stroke-width="2.1" fill="none" stroke-linejoin="round"><rect x="-5.65" y="-3.2" width="11.3" height="6.4" transform="translate(8.9 8.65) rotate(-43)"/><path d="M10.7 12.5 V24.7 H21.6 M10.7 14.5 H21.6"/><rect x="-4.3" y="-2.2" width="8.6" height="4.4" transform="translate(24.8 14.7) rotate(-45)"/><rect x="-4.3" y="-2.2" width="8.6" height="4.4" transform="translate(24.8 25.2) rotate(-45)"/></g>
<g transform="translate(1628 784)" stroke="#c97a26" stroke-width="2.1" fill="none" stroke-linejoin="round"><rect x="-5.65" y="-3.2" width="11.3" height="6.4" transform="translate(8.9 8.65) rotate(-43)"/><path d="M10.7 12.5 V24.7 H21.6 M10.7 14.5 H21.6"/><rect x="-4.3" y="-2.2" width="8.6" height="4.4" transform="translate(24.8 14.7) rotate(-45)"/><rect x="-4.3" y="-2.2" width="8.6" height="4.4" transform="translate(24.8 25.2) rotate(-45)"/></g>
<g transform="translate(1628 832)" stroke="#c97a26" stroke-width="2.1" fill="none" stroke-linejoin="round"><rect x="-5.65" y="-3.2" width="11.3" height="6.4" transform="translate(8.9 8.65) rotate(-43)"/><path d="M10.7 12.5 V24.7 H21.6 M10.7 14.5 H21.6"/><rect x="-4.3" y="-2.2" width="8.6" height="4.4" transform="translate(24.8 14.7) rotate(-45)"/><rect x="-4.3" y="-2.2" width="8.6" height="4.4" transform="translate(24.8 25.2) rotate(-45)"/></g>
<g transform="translate(1628 880)" stroke="#c97a26" stroke-width="2.1" fill="none" stroke-linejoin="round"><rect x="-5.65" y="-3.2" width="11.3" height="6.4" transform="translate(8.9 8.65) rotate(-43)"/><path d="M10.7 12.5 V24.7 H21.6 M10.7 14.5 H21.6"/><rect x="-4.3" y="-2.2" width="8.6" height="4.4" transform="translate(24.8 14.7) rotate(-45)"/><rect x="-4.3" y="-2.2" width="8.6" height="4.4" transform="translate(24.8 25.2) rotate(-45)"/></g>
<g transform="translate(1628 928)" stroke="#c97a26" stroke-width="2.1" fill="none" stroke-linejoin="round"><rect x="-5.65" y="-3.2" width="11.3" height="6.4" transform="translate(8.9 8.65) rotate(-43)"/><path d="M10.7 12.5 V24.7 H21.6 M10.7 14.5 H21.6"/><rect x="-4.3" y="-2.2" width="8.6" height="4.4" transform="translate(24.8 14.7) rotate(-45)"/><rect x="-4.3" y="-2.2" width="8.6" height="4.4" transform="translate(24.8 25.2) rotate(-45)"/></g>
<g transform="translate(1628 976)" stroke="#c97a26" stroke-width="2.1" fill="none" stroke-linejoin="round"><rect x="-5.65" y="-3.2" width="11.3" height="6.4" transform="translate(8.9 8.65) rotate(-43)"/><path d="M10.7 12.5 V24.7 H21.6 M10.7 14.5 H21.6"/><rect x="-4.3" y="-2.2" width="8.6" height="4.4" transform="translate(24.8 14.7) rotate(-45)"/><rect x="-4.3" y="-2.2" width="8.6" height="4.4" transform="translate(24.8 25.2) rotate(-45)"/></g>
<g transform="translate(1628 1024)" stroke="#c97a26" stroke-width="2.1" fill="none" stroke-linejoin="round"><rect x="-5.65" y="-3.2" width="11.3" height="6.4" transform="translate(8.9 8.65) rotate(-43)"/><path d="M10.7 12.5 V24.7 H21.6 M10.7 14.5 H21.6"/><rect x="-4.3" y="-2.2" width="8.6" height="4.4" transform="translate(24.8 14.7) rotate(-45)"/><rect x="-4.3" y="-2.2" width="8.6" height="4.4" transform="translate(24.8 25.2) rotate(-45)"/></g>
<g transform="translate(1620 1064)" stroke="#c97a26" stroke-width="2" fill="none"><rect x="10.9" y="22.9" width="14" height="12" rx="2"/><path d="M14.2 27 H21.9 M14.2 31 H21.9 M22.9 19.5 V15 Q22.9 12.9 25 12.9 H34.8 Q36.9 12.9 36.9 15 V22.8 Q36.9 24.9 34.8 24.9 H28 M26 17 H34 M26 20.9 H34"/></g>
<g transform="translate(1628 1120)" stroke="#c97a26" stroke-width="2.1" fill="none" stroke-linejoin="round"><rect x="-5.65" y="-3.2" width="11.3" height="6.4" transform="translate(8.9 8.65) rotate(-43)"/><path d="M10.7 12.5 V24.7 H21.6 M10.7 14.5 H21.6"/><rect x="-4.3" y="-2.2" width="8.6" height="4.4" transform="translate(24.8 14.7) rotate(-45)"/><rect x="-4.3" y="-2.2" width="8.6" height="4.4" transform="translate(24.8 25.2) rotate(-45)"/></g>
<g transform="translate(1628 1168)" stroke="#c97a26" stroke-width="2.1" fill="none" stroke-linejoin="round"><rect x="-5.65" y="-3.2" width="11.3" height="6.4" transform="translate(8.9 8.65) rotate(-43)"/><path d="M10.7 12.5 V24.7 H21.6 M10.7 14.5 H21.6"/><rect x="-4.3" y="-2.2" width="8.6" height="4.4" transform="translate(24.8 14.7) rotate(-45)"/><rect x="-4.3" y="-2.2" width="8.6" height="4.4" transform="translate(24.8 25.2) rotate(-45)"/></g>
<g transform="translate(1628 1216)" stroke="#c97a26" stroke-width="2.1" fill="none" stroke-linejoin="round"><rect x="-5.65" y="-3.2" width="11.3" height="6.4" transform="translate(8.9 8.65) rotate(-43)"/><path d="M10.7 12.5 V24.7 H21.6 M10.7 14.5 H21.6"/><rect x="-4.3" y="-2.2" width="8.6" height="4.4" transform="translate(24.8 14.7) rotate(-45)"/><rect x="-4.3" y="-2.2" width="8.6" height="4.4" transform="translate(24.8 25.2) rotate(-45)"/></g>
<g transform="translate(1628 1264)" stroke="#c97a26" stroke-width="2.1" fill="none" stroke-linejoin="round"><rect x="-5.65" y="-3.2" width="11.3" height="6.4" transform="translate(8.9 8.65) rotate(-43)"/><path d="M10.7 12.5 V24.7 H21.6 M10.7 14.5 H21.6"/><rect x="-4.3" y="-2.2" width="8.6" height="4.4" transform="translate(24.8 14.7) rotate(-45)"/><rect x="-4.3" y="-2.2" width="8.6" height="4.4" transform="translate(24.8 25.2) rotate(-45)"/></g>
</svg>
<svg style="left:0;top:0" width="1" height="1"><g stroke="#616161" stroke-width="2.4" fill="none">
<path d="M1659.4 342.4 H1666.6 M1655.1 346 H1670.6 M1663 354.6 V357.5 M1654.2 358.6 Q1663 358.6 1671.4 357.4 M1674.6 341.1 V359.4 M1675.9 351.3 H1680 M1657.8 362.2 H1674.6 V369"/>
<ellipse cx="1662.9" cy="351.4" rx="5.5" ry="2.3"/>
<path d="M1682.1 343.9 H1697.5 M1690.2 345.1 Q1689 352 1681.9 356.3 M1690.4 348 Q1692 352.5 1697.1 355.3 M1702.5 341.1 V358 M1703.7 349.9 H1707.8"/>
<ellipse cx="1694.3" cy="363.7" rx="8.1" ry="4.2"/>
</g></svg>

<!-- STATUS -->
<div id="status" class="abs"></div>
<div id="remote" class="abs"></div>
<svg style="left:0;top:0" width="1" height="1">
  <path d="M26 1667.5 L33 1674 L26 1684.5 M41.5 1662.5 L34.5 1669 L41.5 1675.5" stroke="#fff" stroke-width="2" fill="none"/>
  <circle cx="98" cy="1674" r="10.8" stroke="#fff" stroke-width="2" fill="none"/>
  <path d="M93 1669 L103 1679 M103 1669 L93 1679" stroke="#fff" stroke-width="2"/>
  <path d="M154.8 1662.5 L166 1684.5 H143.5 Z" stroke="#fff" stroke-width="2" fill="none" stroke-linejoin="round"/>
  <path d="M154.8 1670 V1677.5 M154.8 1679.5 V1682" stroke="#fff" stroke-width="2"/>
  <path d="M2727.5 1663.5 Q2723.5 1663.5 2723.5 1668 V1671.5 Q2723.5 1674 2721 1674 Q2723.5 1674 2723.5 1676.5 V1680 Q2723.5 1684.5 2727.5 1684.5 M2736 1663.5 Q2740 1663.5 2740 1668 V1671.5 Q2740 1674 2742 1674" stroke="#fff" stroke-width="1.6" fill="none"/>
  <circle cx="2738.5" cy="1681" r="5.6" fill="#fff"/>
  <path d="M2736 1678.5 L2741 1683.5 M2741 1678.5 L2736 1683.5" stroke="#5f2474" stroke-width="1.5"/>
  <rect x="2825.6" y="1663.2" width="8.6" height="8.6" rx="3.6" stroke="#fff" stroke-width="2.2" fill="none"/>
  <rect x="2837.8" y="1663.2" width="8.6" height="8.6" rx="3.6" stroke="#fff" stroke-width="2.2" fill="none"/>
  <path d="M2826 1672.5 Q2822 1675 2822 1679.5 Q2823.5 1686.5 2836 1686.5 Q2848.5 1686.5 2850 1679.5 Q2850 1675 2846 1672.5 Z" fill="#fff"/>
  <path d="M2827.5 1674 H2844.5 V1681 Q2840 1683 2836 1683 Q2831.5 1683 2827.5 1681 Z" fill="#5f2573"/>
  <rect x="2831.6" y="1676.2" width="2.8" height="4.8" rx="1.2" fill="#fff"/>
  <path d="M2824 1662.3 L2848 1685.7" stroke="#5f2573" stroke-width="4"/>
  <path d="M2824 1662.3 L2848 1685.7" stroke="#fff" stroke-width="1.7"/>
  <path d="M2887.5 1677.3 V1672 Q2887.5 1662.5 2896.5 1662.5 Q2899.5 1662.5 2901.5 1664.3" stroke="#fff" stroke-width="1.6" fill="none"/>
  <path d="M2904 1670.5 V1673 Q2904 1678 2905.8 1681.3 H2900" stroke="#fff" stroke-width="1.6" fill="none"/>
  <path d="M2893.5 1683 Q2893.5 1686 2896.3 1686 Q2899 1686 2899 1683 Z" stroke="#fff" stroke-width="1.6" fill="none"/>
  <path d="M2884.3 1685.7 L2908.9 1661.5" stroke="#fff" stroke-width="1.7"/>
</svg>
<div class="sb" style="left:118px">2</div>
<div class="sb" style="left:176px">0</div>
<div class="sb" style="left:2285px">14,</div>
<div class="sb" style="left:2355px">72</div>
<div class="sb" style="left:2460px">: 4</div>
<div class="sb" style="left:2520px">UTF-8</div>
<div class="sb" style="left:2625px;letter-spacing:-1px">CRLF</div>
<div class="sb" style="left:2757px">C#</div>

<svg style="left:0;top:0" width="1" height="1"><g stroke="#fff" stroke-width="2" fill="none">
<path d="M2258.9 1665.9 H2274.8 M2266.8 1666 Q2265 1671 2257.9 1673.5 M2267.3 1668.8 Q2269.5 1672 2276.2 1673.5 M2256.9 1675 H2276.7 M2266.8 1675 V1677.8 M2259.4 1677.8 H2274.3 V1681.2 H2259.4 V1684.6 H2275"/>
<ellipse cx="2335.2" cy="1670.4" rx="5.2" ry="5.6"/>
<path d="M2345.1 1663.4 V1676.8 M2340.6 1667.9 H2345.1 M2340.6 1672.8 H2345.1 M2331.2 1677.8 H2346.2 V1681.2 H2331.2 V1684.6 H2346.5"/>
<path d="M2420.4 1664.9 H2436.2 V1670 M2428.3 1670.9 V1674.3 M2418.9 1674.8 H2437.7"/>
<ellipse cx="2428.3" cy="1680.8" rx="7.4" ry="3.6"/>
<path d="M2440.7 1665.4 V1676.3 H2449.1 V1665.4 M2440.7 1669.9 H2449.1 M2452.1 1664.4 V1677.3 M2456.5 1663.4 V1677.3 M2452.1 1669.9 H2456.5 M2441.7 1678.8 H2456.5 V1685.2"/>
</g></svg>
</div>
</body></html>
